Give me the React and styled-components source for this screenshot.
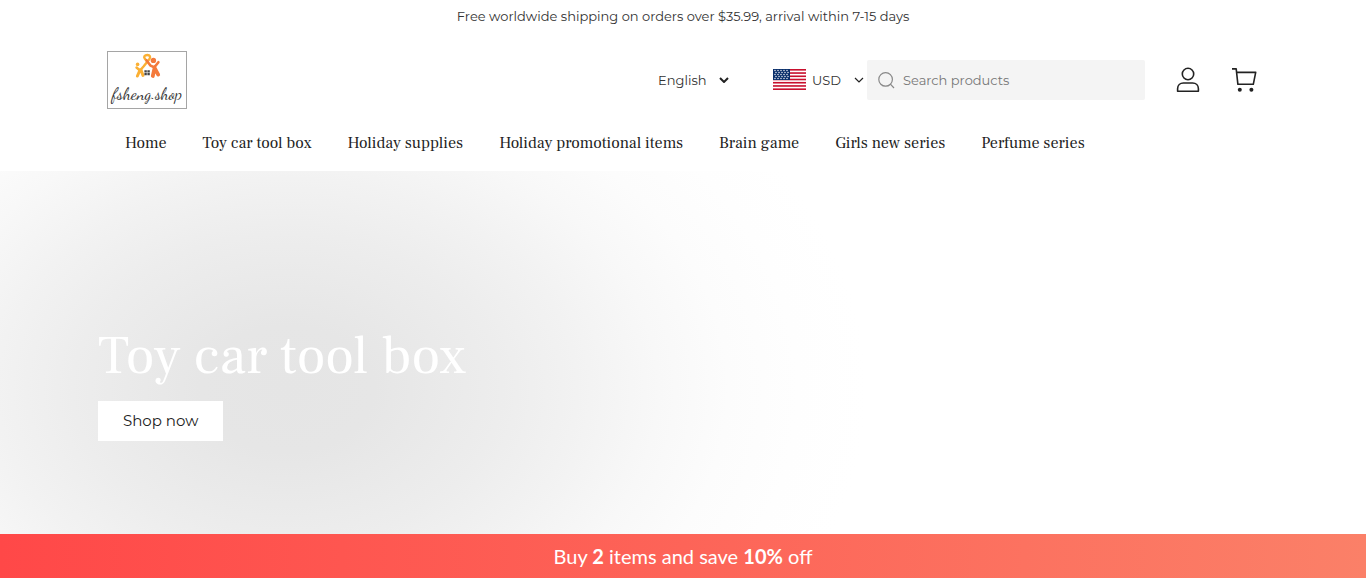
import React from "react";
import styled, { createGlobalStyle } from "styled-components";

const navLinks = [
  "Home",
  "Toy car tool box",
  "Holiday supplies",
  "Holiday promotional items",
  "Brain game",
  "Girls new series",
  "Perfume series",
];

const GlobalStyle = createGlobalStyle`
  *, *::before, *::after {
    box-sizing: border-box;
  }
  body {
    margin: 0;
    background: #fff;
    color: #333;
    font-family: Montserrat, Inter, sans-serif;
    font-size: 13px;
  }
`;

const Logo = () => (
  <svg width="80" height="58" viewBox="0 0 80 58" role="img" aria-label="fsheng.shop">
    <rect x="0.5" y="0.5" width="79" height="57" fill="#fff" stroke="#a5a5a5" />
    <g fill="none" strokeLinecap="round" strokeLinejoin="round">
      <path d="M29.5 16.5l3.5 3 3.5-4 6-7.5c1.2-2 .6-4-2.2-4s-3.8 2-2.6 3.6l2 2.4" stroke="#fbb034" strokeWidth="2.4" />
      <path d="M33 19l-2.6 6M34 19l2 5.4" stroke="#fbb034" strokeWidth="3" />
      <path d="M39.6 9.4l3.8 5.2 4 1.6 4-5" stroke="#f47a3c" strokeWidth="2.6" />
      <path d="M47.6 17l-1.8 8M47.6 17l3.6 6.6" stroke="#f47a3c" strokeWidth="3.8" />
    </g>
    <circle cx="30.6" cy="13.4" r="1.8" fill="#fbb034" />
    <circle cx="46.4" cy="9.4" r="2.7" fill="#f47a3c" />
    <path d="M37.4 19.2h2.4v2.2h-2.4zM40.4 19.2h2.4v2.2h-2.4zM37.4 22h2.4v2.2h-2.4zM40.4 22h2.4v2.2h-2.4z" fill="#444" />
    <LogoText x="40" y="48">
      fsheng.shop
    </LogoText>
  </svg>
);

const UsFlag = () => (
  <svg width="33" height="22" viewBox="0 0 33 22" aria-hidden="true">
    <rect width="33" height="21" fill="#fff" />
    {[0, 2, 4, 6, 8, 10, 12].map((i) => (
      <rect key={i} y={(i * 21) / 13} width="33" height={21 / 13} fill="#c8102e" />
    ))}
    <rect width="17" height="11" fill="#0a2f6b" />
    {[2, 4, 6, 8, 10].map((y, row) =>
      [2, 5, 8, 11, 14].map((x) => (
        <circle key={`${x}-${y}`} cx={x + (row % 2)} cy={y - 0.5} r="0.7" fill="#fff" />
      ))
    )}
  </svg>
);

const Chevron = ({ bold }) => (
  <svg width="10" height="6" viewBox="0 0 10 6" aria-hidden="true">
    <path
      d="M1 1l4 4 4-4"
      fill="none"
      stroke="#222"
      strokeWidth={bold ? 2 : 1.2}
    />
  </svg>
);

const SearchIcon = () => (
  <svg width="17" height="18" viewBox="1 0 17 18" aria-hidden="true">
    <g fill="none" stroke="#888" strokeWidth="1.2">
      <circle cx="8.6" cy="8.4" r="6.8" />
      <path d="M13.4 13.2l3.6 3.8" />
    </g>
  </svg>
);

const UserIcon = () => (
  <svg width="24" height="26" viewBox="0 0 24 26" aria-hidden="true">
    <g fill="none" stroke="#222" strokeWidth="1.6">
      <circle cx="12" cy="7" r="5.7" />
      <path d="M1.6 24.2v-2.4c0-3.4 2.5-5.8 5.8-5.8h9.2c3.3 0 5.8 2.4 5.8 5.8v2.4z" strokeLinejoin="round" />
    </g>
  </svg>
);

const CartIcon = () => (
  <svg width="26" height="26" viewBox="0 0 26 26" aria-hidden="true">
    <path
      d="M1 1.9h4.2l1.7 15.4h15.4l2.4-11.9H5.6"
      fill="none"
      stroke="#222"
      strokeWidth="1.6"
      strokeLinejoin="round"
    />
    <circle cx="8.8" cy="22.7" r="2" fill="#222" />
    <circle cx="20.4" cy="22.7" r="2" fill="#222" />
  </svg>
);

const App = () => {
  return (
    <Page>
      <GlobalStyle />
      <Announcement>
        Free worldwide shipping on orders over $35.99, arrival within 7-15 days
      </Announcement>
      <Header>
        <LogoLink href="#">
          <Logo />
        </LogoLink>
        <Tools>
          <Picker $gap="44px">
            <Select aria-label="Language" $width="71px">
              <option>English</option>
            </Select>
            <Chevron bold />
          </Picker>
          <Picker $gap="3px">
            <UsFlag />
            <Select aria-label="Currency" $width="58px" $indent="6px">
              <option>USD</option>
            </Select>
            <Chevron />
          </Picker>
          <Search>
            <SearchIcon />
            <input type="search" aria-label="Search products" placeholder="Search products" />
          </Search>
          <IconButton aria-label="Account">
            <UserIcon />
          </IconButton>
          <IconButton aria-label="Cart">
            <CartIcon />
          </IconButton>
        </Tools>
      </Header>
      <Nav>
        {navLinks.map((link) => (
          <a key={link} href="#">
            {link}
          </a>
        ))}
      </Nav>
      <Hero>
        <h1>Toy car tool box</h1>
        <ShopButton>Shop now</ShopButton>
      </Hero>
      <Promo>
        <p>
          Buy <strong>2</strong> items and save <strong>10%</strong> off
        </p>
      </Promo>
    </Page>
  );
};

const LogoText = styled.text`
  font-family: "Dancing Script", "Liberation Serif", serif;
  font-size: 17px;
  font-weight: 400;
  text-anchor: middle;
  fill: #333;
`;

const Page = styled.div`
  min-height: 100vh;
  display: flex;
  flex-direction: column;
`;

const Announcement = styled.div`
  padding: 7px 16px 8px;
  line-height: 18px;
  text-align: center;
`;

const Header = styled.header`
  display: flex;
  align-items: center;
  justify-content: space-between;
  padding: 18px 109px 0 107px;
`;

const LogoLink = styled.a`
  display: flex;
`;

const Tools = styled.div`
  display: flex;
  align-items: center;
`;

const Picker = styled.div`
  display: flex;
  align-items: center;
  margin-right: ${(props) => props.$gap};
  svg {
    flex: none;
  }
  select + svg {
    margin-left: -10px;
    pointer-events: none;
  }
`;

const Select = styled.select`
  width: ${(props) => props.$width};
  height: 24px;
  padding: 0 0 0 ${(props) => props.$indent || 0};
  border: 0;
  appearance: none;
  background: none;
  color: #333;
  font: inherit;
  cursor: pointer;
`;

const Search = styled.label`
  display: flex;
  align-items: center;
  gap: 8px;
  width: 278px;
  height: 40px;
  padding: 0 11px;
  border-radius: 2px;
  background: #f4f4f4;
  input {
    flex: 1;
    min-width: 0;
    padding: 0;
    border: 0;
    outline: none;
    background: none;
    color: #222;
    font: inherit;
  }
  input::placeholder {
    color: #777;
  }
`;

const IconButton = styled.button`
  display: flex;
  align-items: center;
  justify-content: center;
  width: 26px;
  height: 26px;
  margin-left: 30px;
  padding: 0;
  border: 0;
  background: none;
  cursor: pointer;
`;

const Nav = styled.nav`
  display: flex;
  flex-wrap: wrap;
  gap: 0 36px;
  padding: 22px 125px 16px;
  a {
    color: #222;
    font-family: "Frank Ruhl Libre", "Liberation Serif", serif;
    font-size: 16px;
    line-height: 24px;
    text-decoration: none;
  }
`;

const Hero = styled.section`
  flex: 1;
  display: flex;
  flex-direction: column;
  align-items: flex-start;
  justify-content: flex-end;
  padding: 48px 98px 93px;
  background: radial-gradient(
    ellipse 580px 420px at 287px 60%,
    #e5e5e5 0%,
    #e6e6e6 15%,
    #ededed 37%,
    #f2f2f2 50%,
    #f8f8f8 64%,
    #fcfcfc 76%,
    #fefefe 88%,
    #fff 100%
  );
  h1 {
    margin: 0 0 13px;
    color: #fff;
    font-family: "Frank Ruhl Libre", "Liberation Serif", serif;
    font-size: 54px;
    font-weight: 400;
    line-height: 64px;
  }
`;

const ShopButton = styled.button`
  height: 40px;
  padding: 0 25px 2px;
  border: 0;
  background: #fff;
  color: #222;
  font-family: inherit;
  font-size: 15px;
  cursor: pointer;
`;

const Promo = styled.aside`
  padding: 8px 16px;
  background: linear-gradient(90deg, #ff4848, #fb8068);
  color: #fff;
  font-family: Lato, sans-serif;
  font-size: 20px;
  line-height: 28px;
  text-align: center;
  p {
    margin: 0;
  }
`;

export default App;
